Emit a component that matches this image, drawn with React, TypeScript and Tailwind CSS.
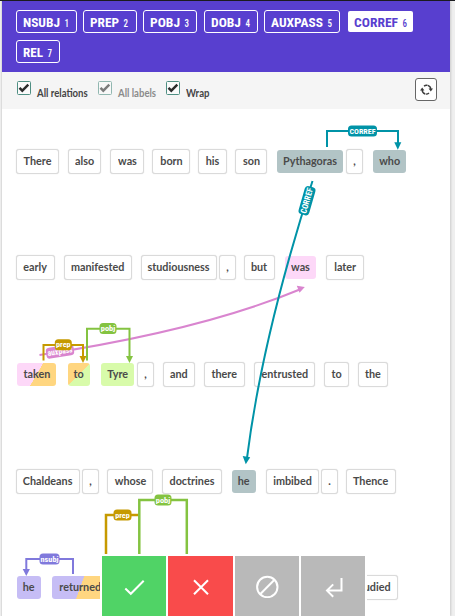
import React from "react";

type Label = { name: string; n: number; box: string; width: number; active?: boolean };

const labels: Label[] = [
  { name: "NSUBJ", n: 1, box: "w-[61px]", width: 37 },
  { name: "PREP", n: 2, box: "w-[54px] ml-[6px]", width: 29 },
  { name: "POBJ", n: 3, box: "w-[54px] ml-[6px]", width: 30 },
  { name: "DOBJ", n: 4, box: "w-[54px] ml-[7px]", width: 30 },
  { name: "AUXPASS", n: 5, box: "w-[76px] ml-[6px]", width: 52 },
  { name: "CORREF", n: 6, box: "w-[65px] ml-[8px]", width: 44, active: true },
  { name: "REL", n: 7, box: "w-[44px]", width: 20 },
];

function LabelButton({ label }: { label: Label }) {
  return (
    <button
      className={`flex shrink-0 items-center ${label.box} ${
        label.active
          ? "my-px h-[21px] rounded-[2px] bg-white pl-[6px] text-[#583fcf]"
          : "h-[23px] rounded-[3px] border border-white pl-[6px] text-white"
      }`}
    >
      <svg className="h-[20px] w-full overflow-visible font-['Roboto_Condensed',Roboto,sans-serif]" fill="currentColor">
        <text x="0" y="14.7" fontSize="13" fontWeight="700" textLength={label.width} lengthAdjust="spacingAndGlyphs">
          {label.name}
        </text>
        <text x={label.width + 4.5} y="14.7" fontSize="10" fontWeight="500" textLength="4.5" lengthAdjust="spacingAndGlyphs">
          {label.n}
        </text>
      </svg>
    </button>
  );
}

function Check({ text, className, muted }: { text: string; className: string; muted?: boolean }) {
  return (
    <label className={`flex items-start ${className} ${muted ? "opacity-60" : ""}`}>
      <span className="flex h-[14px] w-[14px] shrink-0 items-center justify-center rounded-[1.5px] border border-[#4f8f83] bg-[#fafafa]">
        <svg width="12" height="12" viewBox="0 0 12 12" fill="none" stroke="#2b2b2b" strokeWidth="2.4">
          <path d="M1.5 5.8 4.3 8.7 10.3 2.7" />
        </svg>
      </span>
      <span className="ml-[6px] mt-[4px] origin-left scale-x-[0.87] whitespace-nowrap text-[11px] font-bold leading-[15px] text-[#444]">
        {text}
      </span>
    </label>
  );
}

const fills = {
  plain: "border border-[#dadada] bg-white h-[25px] shadow-[0_0_1px_#cfcfcf]",
  teal: "bg-[#b2c4c6] h-[23px]",
  pink: "bg-[#fdd8f8] h-[23px]",
  pinkOrange: "bg-[linear-gradient(120deg,#fdd8f8_50%,#ffd680_50.5%)] h-[23px]",
  orangeGreen: "bg-[linear-gradient(135deg,#ffd680_50%,#d8fbaa_50.5%)] h-[23px]",
  green: "bg-[#d8fbaa] h-[23px]",
  violet: "bg-[#c6bdf5] h-[23px]",
  violetOrange: "bg-[linear-gradient(110deg,#c6bdf5_50%,#ffd680_50.5%)] h-[23px]",
};

type Token = [string, string, (keyof typeof fills)?];

const rows: { pos: string; tokens: Token[] }[] = [
  {
    pos: "mt-[40px]",
    tokens: [
      ["There", "w-[43px]"],
      ["also", "w-[33px] ml-[9px]"],
      ["was", "w-[34px] ml-[9px]"],
      ["born", "w-[38px] ml-[8px]"],
      ["his", "w-[29px] ml-[8px]"],
      ["son", "w-[32px] ml-[8px]"],
      ["Pythagoras", "w-[66px] ml-[10px]", "teal"],
      [",", "w-[17px] ml-[3px]"],
      ["who", "w-[33px] ml-[10px]", "teal"],
    ],
  },
  {
    pos: "mt-[81px]",
    tokens: [
      ["early", "w-[39px]"],
      ["manifested", "w-[68px] ml-[9px]"],
      ["studiousness", "w-[76px] ml-[9px]"],
      [",", "w-[17px] ml-[2px]"],
      ["but", "w-[31px] ml-[8px]"],
      ["was", "w-[31px] ml-[10px]", "pink"],
      ["later", "w-[38px] ml-[10px]"],
    ],
  },
  {
    pos: "mt-[82px]",
    tokens: [
      ["taken", "w-[39px] ml-px", "pinkOrange"],
      ["to", "w-[22px] ml-[12px]", "orangeGreen"],
      ["Tyre", "w-[33px] ml-[11px]", "green"],
      [",", "w-[17px] ml-[3px]"],
      ["and", "w-[32px] ml-[9px]"],
      ["there", "w-[41px] ml-[9px]"],
      ["entrusted", "w-[61px] ml-[9px]"],
      ["to", "w-[25px] ml-[9px]"],
      ["the", "w-[30px] ml-[9px]"],
    ],
  },
  {
    pos: "mt-[82px]",
    tokens: [
      ["Chaldeans", "w-[64px]"],
      [",", "w-[17px] ml-[2px]"],
      ["whose", "w-[46px] ml-[8px]"],
      ["doctrines", "w-[60px] ml-[9px]"],
      ["he", "w-[24px] ml-[10px]", "teal"],
      ["imbibed", "w-[53px] ml-[10px]"],
      [".", "w-[17px] ml-[2px]"],
      ["Thence", "w-[50px] ml-[8px]"],
    ],
  },
  {
    pos: "mt-[81px]",
    tokens: [
      ["he", "w-[24px] ml-px", "violet"],
      ["returned", "w-[56px] ml-[11px]", "violetOrange"],
      ["studied", "w-[50px] ml-[240px]"],
    ],
  },
];

type TagProps = { x: number; y: number; w: number; color: string; text: string; size?: number; rotate?: number; tl: number };

function Tag({ x, y, w, color, text, size = 8, rotate = 0, tl }: TagProps) {
  return (
    <g transform={`translate(${x} ${y}) rotate(${rotate})`}>
      <rect x={-w / 2} y="-5.5" width={w} height="11" rx="3.5" fill={color} />
      <text y="2.6" textAnchor="middle" fontSize={size} fontWeight="700" fill="#fff" textLength={tl} lengthAdjust="spacingAndGlyphs">
        {text}
      </text>
    </g>
  );
}

function Arcs() {
  return (
    <svg
      className="pointer-events-none absolute left-0 top-0 font-['Roboto_Condensed',Roboto,sans-serif]"
      width="455"
      height="616"
      viewBox="0 0 455 616"
      fill="none"
      strokeWidth="2"
    >
      <path d="M39.5 355C145 339 234 317 301 289" stroke="#d985cf" />
      <path d="M304.8 287 296.8 285.8 299.5 292.8Z" fill="#d985cf" />
      <Tag x={60} y={351.5} w={28} color="#d985cf" text="auxpass" size={8.5} rotate={-9} tl={25} />

      <path d="M43.5 360.5V345H83V357" stroke="#c69a00" />
      <path d="M79.5 356H86.5L83 363Z" fill="#c69a00" />
      <Tag x={63.3} y={344.7} w={17} color="#c69a00" text="prep" tl={14.5} />

      <path d="M87 360.5V328.7H129.5V357" stroke="#84c341" />
      <path d="M126 356H133L129.5 363Z" fill="#84c341" />
      <Tag x={108} y={328.5} w={17} color="#84c341" text="pobj" tl={14.5} />

      <path d="M327 147V131H398V143" stroke="#0093a7" />
      <path d="M394.3 142.3H401.3L397.8 149.8Z" fill="#0093a7" />
      <Tag x={362.5} y={131} w={29} color="#0093a7" text="CORREF" tl={26} />

      <path d="M312.5 181C289 254 260 355 247 458" stroke="#0093a7" />
      <path d="M242.7 456 250.2 457.3 245.8 464.3Z" fill="#0093a7" />
      <Tag x={307} y={200.7} w={29} color="#0093a7" text="CORREF" size={8.5} rotate={-74} tl={26} />

      <path d="M106 554V515H139" stroke="#c69a00" strokeWidth="2.5" />
      <path d="M139.3 554V500H186.8V554" stroke="#84c341" strokeWidth="2.5" />
      <Tag x={122.5} y={515} w={18} color="#c69a00" text="prep" tl={14.5} />
      <Tag x={163} y={500} w={17} color="#84c341" text="pobj" tl={14.5} />

      <path d="M26.3 570V559H73V574" stroke="#8079dc" />
      <path d="M22.7 569H29.9L26.3 576Z" fill="#8079dc" />
      <Tag x={49.5} y={559} w={20} color="#8079dc" text="nsubj" tl={18} />
    </svg>
  );
}

export default function App() {
  return (
    <div className="relative flex h-[616px] w-[455px] flex-col overflow-hidden border-t border-[#1b1b20] bg-[#efefef] font-[Lato,'Open_Sans',sans-serif]">
      <main className="ml-px flex h-full w-[449px] flex-col border-l border-[#dcdcdc] bg-white shadow-[1px_0_2px_rgba(0,0,0,0.15)]">
        <header className="flex h-[71px] shrink-0 flex-wrap content-start gap-y-[7px] bg-[#583fcf] pl-[14px] pt-[9px]">
          {labels.map((label) => (
            <LabelButton key={label.name} label={label} />
          ))}
        </header>
        <section className="flex h-[37px] shrink-0 items-start bg-[#f5f5f5] pl-[15px] pt-[9px]">
          <Check text="All relations" className="w-[81px]" />
          <Check text="All labels" className="w-[68px]" muted />
          <Check text="Wrap" className="w-[60px]" />
          <button className="-mt-[3px] ml-[189px] flex h-[23px] w-[22px] shrink-0 items-center justify-center rounded-[3px] border border-[#666] bg-white">
            <svg width="13" height="12" viewBox="0 0 13 12" fill="none" stroke="#3c3c3c" strokeWidth="1.4">
              <path d="M5.2 10A4.3 4.3 0 0 1 2.2 5.8M4 2.1A4.3 4.3 0 0 1 7.4 1.3M7.8 1.4A4.3 4.3 0 0 1 10.8 5.2M9 9A4.3 4.3 0 0 1 5.8 10.1" />
              <path d="M0 6.4H4.4L2.2 3.6ZM8.6 4.6H13L10.8 7.4Z" fill="#3c3c3c" stroke="none" />
            </svg>
          </button>
        </section>
        <section className="flex flex-col pl-[14px]">
          {rows.map((row, r) => (
            <div key={r} className={`flex h-[25px] shrink-0 items-center ${row.pos}`}>
              {row.tokens.map(([text, box, fill = "plain"], i) => (
                <span
                  key={i}
                  className={`flex shrink-0 items-center justify-center rounded-[3px] text-[12px] font-bold leading-none text-[#4a4a4a] ${box} ${fills[fill]}`}
                >
                  <span className="-mt-px block scale-x-[0.9]">{text}</span>
                </span>
              ))}
            </div>
          ))}
        </section>
      </main>
      <div className="absolute -top-px left-0">
        <Arcs />
      </div>
      <nav className="absolute bottom-0 left-[100px] flex h-[62px] w-[267px] gap-[2px] bg-white px-[2px] pt-[2px] text-white">
        <button className="flex h-[60px] w-[64px] items-center justify-center bg-[#50d366]">
          <svg width="22" height="22" viewBox="0 0 22 22" fill="none" stroke="currentColor" strokeWidth="2">
            <path d="M2.3 13.5 7.8 18.8 20.7 5.8" />
          </svg>
        </button>
        <button className="flex h-[60px] w-[65px] items-center justify-center bg-[#f94b4b]">
          <svg width="20" height="20" viewBox="0 0 20 20" fill="none" stroke="currentColor" strokeWidth="2">
            <path d="M3 4.2 17 18.2M17 4.2 3 18.2" />
          </svg>
        </button>
        <button className="flex h-[60px] w-[64px] items-center justify-center bg-[#b9b9b9]">
          <svg width="24" height="24" viewBox="0 0 24 24" fill="none" stroke="currentColor" strokeWidth="2">
            <circle cx="12.3" cy="13" r="10.2" />
            <path d="M19.5 5.8 5.1 20.2" />
          </svg>
        </button>
        <button className="flex h-[60px] w-[64px] items-center justify-center bg-[#b9b9b9]">
          <svg width="20" height="24" viewBox="0 0 20 24" fill="none" stroke="currentColor" strokeWidth="2">
            <path d="M18.5 4V16.6H4.5M10.2 10.4 4 16.6 10.2 22.8" />
          </svg>
        </button>
      </nav>
    </div>
  );
}
